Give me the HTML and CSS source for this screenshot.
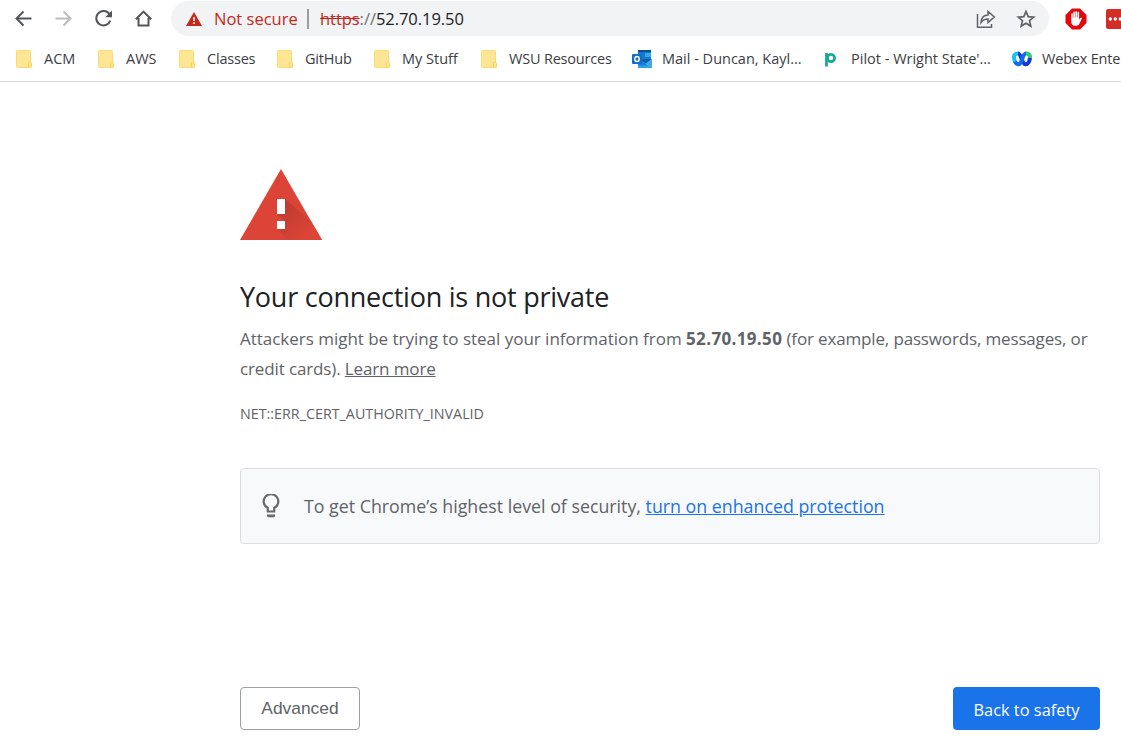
FILE: index.html
```html
<!DOCTYPE html>
<html lang="en">
<head>
<meta charset="utf-8">
<title>Privacy error</title>
<link rel="stylesheet" href="styles.css">
</head>
<body>
<header class="browser">
  <div class="toolbar">
    <nav class="nav">
      <svg class="nav-icon" viewBox="0 0 20 20"><path d="M17.500 9.500H2.500M9.500 2.500l-7 7 7 7"/></svg>
      <svg class="nav-icon disabled" viewBox="0 0 20 20"><path d="M1.500 9.500h15M9.500 2.500l7 7-7 7"/></svg>
      <svg class="nav-icon" viewBox="0 0 20 20"><path d="M15.800 5.700A7.200 7.200 0 1 0 16.300 11.600"/><path class="solid" d="M18 1.500v6.800h-6.800z"/></svg>
      <svg class="nav-icon" viewBox="0 0 20 20"><path d="M1.800 10.300L9.500 2.600l7.700 7.700M4.500 9v7.500h10V9"/></svg>
    </nav>
    <div class="omnibox">
      <svg class="warn" viewBox="0 0 16 14"><path fill="#c5281c" d="M8 0l8 14H0z"/><path fill="#fff" d="M7.200 5h1.600v4H7.200zM7.200 10.300h1.600v1.600H7.200z"/></svg>
      <span class="notsecure">Not secure</span>
      <span class="divider"></span>
      <span class="url"><s>https</s><span class="sep">://</span>52.70.19.50</span>
      <svg class="share" viewBox="0 0 20 20"><path d="M1.500 5v13.300h14V15M5 13.500c.4-5 2.800-7.500 7-7.500V2.500L18.300 8 12 13.500V10c-3.200 0-5.200.9-7 3.500z"/></svg>
      <svg class="star" viewBox="0 0 20 20"><path d="M10 2.500l2.200 5.100 5.500.5-4.200 3.600 1.300 5.400-4.800-2.900-4.800 2.900 1.300-5.400-4.200-3.600 5.500-.5z"/></svg>
    </div>
    <svg class="adblock" viewBox="0 0 22 22"><path fill="#e4080a" d="M7 .5h8L21.500 7v8L15 21.500H7L.5 15V7z"/><path fill="#fff" d="M6.300 10.300V6.200c0-1.200 1.500-1.200 1.500 0v3.500h.5V4.500c0-1.200 1.600-1.200 1.600 0v5h.5V3.800c0-1.200 1.600-1.200 1.600 0v5.700h.5V4.700c0-1.200 1.600-1.200 1.600 0v7l1.200-1.600c.7-.8 1.900-.3 1.400.7l-2.600 5.500c-.5.900-1.400 1.400-2.600 1.400H10c-2.400 0-3.700-1.500-3.700-3.700z"/></svg>
    <svg class="lastpass" viewBox="0 0 22 20"><rect width="22" height="20" rx="2" fill="#d32d27"/><g fill="#fff"><circle cx="4.300" cy="10" r="1.700"/><circle cx="9.300" cy="10" r="1.700"/><circle cx="14.300" cy="10" r="1.700"/></g></svg>
  </div>
  <div class="bookmarks">
    <svg class="defs" width="0" height="0"><symbol id="folder" viewBox="0 0 16 18"><rect x=".5" y=".5" width="14" height="17" rx="1" fill="#ffe694" stroke="#fbdc74"/><rect x="12.500" y="12.500" width="3" height="5" rx="1" fill="#ffe694" stroke="#f8d34f"/></symbol></svg>
    <div class="bm"><svg class="folder"><use href="#folder"/></svg><span>ACM</span></div>
    <div class="bm"><svg class="folder"><use href="#folder"/></svg><span>AWS</span></div>
    <div class="bm"><svg class="folder"><use href="#folder"/></svg><span class="tight">Classes</span></div>
    <div class="bm"><svg class="folder"><use href="#folder"/></svg><span class="tight">GitHub</span></div>
    <div class="bm"><svg class="folder"><use href="#folder"/></svg><span>My Stuff</span></div>
    <div class="bm"><svg class="folder"><use href="#folder"/></svg><span class="tight">WSU Resources</span></div>
    <div class="bm wide"><svg class="outlook" viewBox="0 0 20 18"><path fill="#1879cb" d="M6 0h13v10H6z"/><path fill="#0a4f96" d="M6 0h13v2H6z"/><path fill="#32a9e7" d="M13 3h6v4h-6z"/><path fill="#135da8" d="M6 9h14l-6 5z"/><path fill="#1b83d6" d="M6 8l14 10H6z"/><path fill="#39a9ea" d="M20 9v9l-6-4.500z"/><path fill="#29a5e8" d="M6 15.500h10.500L20 18H6z"/><rect y="4" width="10" height="10" rx="1" fill="#0f6cc9"/><ellipse cx="5" cy="9" rx="2.200" ry="2.500" fill="none" stroke="#fff" stroke-width="1.400"/></svg><span>Mail - Duncan, Kayl...</span></div>
    <div class="bm"><svg class="pilot" viewBox="0 0 15 18"><path d="M2.500 3v13.500"/><ellipse cx="7" cy="8" rx="3.600" ry="3.700"/></svg><span>Pilot - Wright State'...</span></div>
    <div class="bm wide"><svg class="webex" viewBox="0 0 20 16"><path stroke="#103bd0" d="M6 2.500c3.500 0 3.800 10.800 7.500 10.800 2.500 0 4.200-3 4.500-6.800"/><path stroke="#2cd16d" d="M14 2.500c2.700 0 4.200 1.200 4 4"/><path stroke="#16c5ef" d="M6 2.500C3 2.500 1.800 4 2 6.500c.1 2 .6 3.500 1.400 4.700"/><path stroke="#1768f0" d="M3 10.500c.8 1.800 2 2.800 3.500 2.800C10.300 13.300 10 2.500 14 2.500"/></svg><span class="tight">Webex Ente</span></div>
  </div>
</header>
<main class="page">
  <svg class="alert" viewBox="0 0 82 71">
    <defs><linearGradient id="shade" x1="0" y1="0" x2="1" y2="1"><stop offset="0" stop-color="#b8382d"/><stop offset=".75" stop-color="#db4437"/></linearGradient></defs>
    <path fill="#db4437" d="M41 0l41 71H0z"/>
    <path fill="url(#shade)" d="M45 30l26 22 11 19H48L37 60l8-8-8-7z"/>
    <path fill="#fff" d="M37 30h8v15h-8zM37 52h8v8h-8z"/>
  </svg>
  <h1>Your connection is not private</h1>
  <p class="body"><span>Attackers might be trying to steal your information from <b>52.70.19.50</b></span><span class="example"> (for example, passwords, messages, or</span><br><span class="last-line">credit cards). <a class="learn">Learn more</a></span></p>
  <p class="code">NET::ERR_CERT_AUTHORITY_INVALID</p>
  <section class="tip">
    <svg class="bulb" viewBox="0 0 18 25"><path fill="none" stroke="#666a6d" stroke-width="2.200" d="M5.800 17.500v-3.500A7.300 7.300 0 1 1 12.200 14v3.500z"/><path fill="#666a6d" d="M5 20.500h8v1.200q0 1.500-1.500 1.500h-5Q5 23.200 5 21.700z"/></svg>
    <span class="tiptext">To get Chrome’s highest level of security, <a>turn on enhanced protection</a></span>
  </section>
  <div class="actions"><button class="advanced">Advanced</button><button class="safety">Back to safety</button></div>
</main>
</body>
</html>
```
FILE: styles.css
```css
* { box-sizing: border-box; }
body { margin: 0; width: 1121px; height: 741px; overflow: hidden; background: #fff; color: #5f6368; font-family: "Open Sans", "Noto Sans", sans-serif; }
svg { display: block; flex: none; }
.browser { height: 82px; border-bottom: 1px solid #d5d7da; overflow: hidden; }
.toolbar { display: flex; align-items: center; height: 37px; padding-left: 14px; }
.nav { display: flex; gap: 20px; width: 157px; flex: none; }
.nav-icon { width: 20px; height: 20px; fill: none; stroke: #53575b; stroke-width: 2; }
.nav-icon .solid { fill: #53575b; stroke: none; }
.nav-icon.disabled { stroke: #babcbe; }
.omnibox { display: flex; align-items: center; width: 878px; height: 35px; padding-left: 15px; border-radius: 18px; background: #f1f3f4; flex: none; font-size: 16.5px; line-height: 22px; white-space: nowrap; }
.warn { width: 16px; height: 14px; }
.notsecure { width: 93px; margin-left: 12px; color: #c5281c; }
.divider { width: 2px; height: 20px; background: #9a9da1; }
.url { width: 656px; margin-left: 11px; color: #202124; letter-spacing: -.05px; }
.url s { color: #c5281c; }
.sep { color: #6e7276; }
.share, .star { width: 20px; height: 20px; fill: none; stroke: #5f6368; stroke-width: 1.5; }
.star { margin-left: 20px; stroke-width: 1.7; }
.adblock { width: 22px; height: 22px; margin-left: 16px; }
.lastpass { width: 22px; height: 20px; margin-left: 19px; }
.bookmarks { display: grid; grid-template-columns: 82px 81px 98px 97px 107px 151px 192px 188px 109px; height: 44px; padding-left: 16px; font-size: 14.5px; color: #3c4043; white-space: nowrap; }
.defs { display: none; }
.bm { display: flex; align-items: center; gap: 12px; }
.bm span { padding-bottom: 2px; }
.tight { letter-spacing: -.2px; }
.bm.wide { gap: 10px; }
.folder { width: 16px; height: 18px; }
.outlook { width: 20px; height: 18px; }
.pilot { width: 15px; height: 18px; fill: none; stroke: #16a99a; stroke-width: 2.8; }
.webex { width: 20px; height: 16px; fill: none; stroke-width: 4; }
.page { width: 860px; margin: 87px 0 0 240px; white-space: nowrap; }
.alert { width: 82px; height: 71px; }
h1 { margin: 37px 0 0; height: 40px; line-height: 40px; font-size: 27px; font-weight: 400; letter-spacing: -.24px; color: #202124; }
p { margin: 0; }
.body { margin-top: 7px; font-size: 17px; line-height: 30px; letter-spacing: -.02px; }
.body b { letter-spacing: .35px; }
.example { letter-spacing: -.15px; }
.last-line { letter-spacing: -.13px; }
.learn { text-decoration: underline; }
.code { margin-top: 19px; height: 22px; line-height: 22px; font-size: 14.3px; }
.tip { display: flex; align-items: center; height: 76px; margin-top: 43px; padding-left: 21px; border: 1px solid #dadce0; border-radius: 4px; background: #f8f9fb; font-size: 17.8px; }
.bulb { width: 18px; height: 25px; }
.tiptext { margin-left: 24px; }
.tiptext a { color: #1a73e8; text-decoration: underline; }
.actions { display: flex; justify-content: space-between; margin-top: 143px; }
button { height: 43px; padding: 0; border-radius: 4px; white-space: nowrap; }
.advanced { width: 120px; border: 1px solid #9aa0a6; background: #fff; color: #5f6368; font: 17.4px "Liberation Sans", sans-serif; }
.safety { width: 147px; padding-top: 2px; border: 0; background: #1a73e8; color: #fff; font: 16.4px "Open Sans", sans-serif; }
```
